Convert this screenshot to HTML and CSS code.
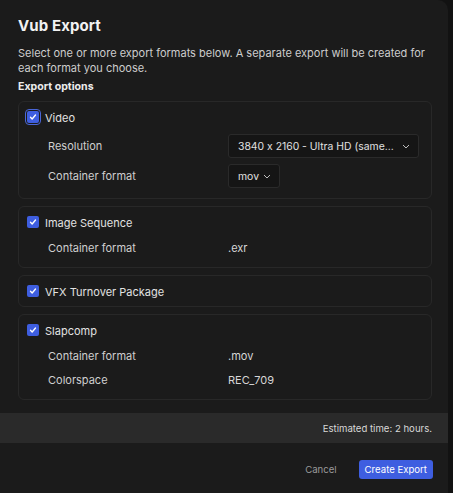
FILE: index.html
```html
<!DOCTYPE html>
<html>
<head>
<meta charset="utf-8">
<link rel="stylesheet" href="styles.css">
</head>
<body>
<div class="dialog">
  <div class="main">
    <h1 class="title">Vub Export</h1>
    <p class="desc">Select one or more export formats below. A separate export will be created for each format you choose.</p>
    <h2 class="section">Export options</h2>

    <div class="card">
      <label class="check-row">
        <span class="cb focus"><svg viewBox="0 0 12 12"><path d="M3 6.3l2 2.1L9 3.6"/></svg></span>
        <span class="cb-label">Video</span>
      </label>
      <div class="opt opt-select">
        <span class="opt-name">Resolution</span>
        <span class="select wide">3840 x 2160 - Ultra HD (same... <svg class="chev" viewBox="0 0 8 5"><path d="M1 1l3 3 3-3"/></svg></span>
      </div>
      <div class="opt opt-select">
        <span class="opt-name">Container format</span>
        <span class="select">mov <svg class="chev" viewBox="0 0 8 5"><path d="M1 1l3 3 3-3"/></svg></span>
      </div>
    </div>

    <div class="card">
      <label class="check-row">
        <span class="cb"><svg viewBox="0 0 12 12"><path d="M3 6.3l2 2.1L9 3.6"/></svg></span>
        <span class="cb-label">Image Sequence</span>
      </label>
      <div class="opt">
        <span class="opt-name">Container format</span>
        <span class="opt-val">.exr</span>
      </div>
    </div>

    <div class="card">
      <label class="check-row">
        <span class="cb"><svg viewBox="0 0 12 12"><path d="M3 6.3l2 2.1L9 3.6"/></svg></span>
        <span class="cb-label">VFX Turnover Package</span>
      </label>
    </div>

    <div class="card">
      <label class="check-row">
        <span class="cb"><svg viewBox="0 0 12 12"><path d="M3 6.3l2 2.1L9 3.6"/></svg></span>
        <span class="cb-label">Slapcomp</span>
      </label>
      <div class="opt">
        <span class="opt-name">Container format</span>
        <span class="opt-val">.mov</span>
      </div>
      <div class="opt">
        <span class="opt-name">Colorspace</span>
        <span class="opt-val">REC_709</span>
      </div>
    </div>
  </div>

  <div class="estimate">Estimated time: 2 hours.</div>

  <div class="actions">
    <button class="btn-cancel">Cancel</button>
    <button class="btn-primary">Create Export</button>
  </div>
</div>
</body>
</html>
```

FILE: styles.css
```css
* { box-sizing: border-box; }
html, body {
  margin: 0;
  padding: 0;
  background: #121212;
  height: 100%;
}
body {
  font-family: Inter, "Noto Sans", sans-serif;
  font-feature-settings: "calt" 0;
  color: #e6e6e6;
  overflow: hidden;
}
.dialog {
  width: 448px;
  height: 493px;
  background: #1b1b1b;
  border-top-right-radius: 10px;
  display: flex;
  flex-direction: column;
}
.main {
  padding: 16px 16px 0 18px;
  flex: 0 0 auto;
}
.title {
  margin: 0;
  font-size: 15px;
  font-weight: 700;
  line-height: 20px;
  color: #f2f2f2;
  letter-spacing: 0.1px;
}
.desc {
  margin: 10px 0 0;
  font-size: 11px;
  line-height: 15px;
  color: #cdcdcd;
}
.section {
  margin: 4px 0 0;
  font-size: 10.6px;
  font-weight: 700;
  line-height: 14px;
  color: #ececec;
}
.card {
  border: 1px solid #282828;
  border-radius: 6px;
  margin-top: 7px;
  padding: 7px 11px 7px 8px;
  display: flex;
  flex-direction: column;
}
.check-row {
  display: flex;
  align-items: center;
  height: 16px;
}
.check-row + .opt { margin-top: 6px; }
.cb {
  width: 12px;
  height: 12px;
  border-radius: 2px;
  background: #3e5ee0;
  display: flex;
  align-items: center;
  justify-content: center;
  margin-right: 6px;
  flex: 0 0 12px;
}
.cb.focus {
  outline: 1.5px solid #4a66d6;
  outline-offset: 1px;
}
.cb svg {
  width: 10px;
  height: 10px;
  fill: none;
  stroke: #ffffff;
  stroke-width: 1.6;
  stroke-linecap: round;
  stroke-linejoin: round;
}
.cb-label {
  font-size: 11px;
  color: #e2e2e2;
  padding-top: 2px;
}
.opt {
  display: flex;
  align-items: center;
  height: 24px;
  font-size: 11px;
  color: #cfcfcf;
  padding-left: 21px;
}
.opt-select { height: 30px; }
.opt-name {
  width: 180px;
  flex: 0 0 180px;
}
.opt-val { color: #d6d6d6; }
.select {
  display: inline-flex;
  align-items: center;
  height: 24px;
  padding: 0 8px 0 9px;
  background: #151515;
  border: 1px solid #2a2a2a;
  border-radius: 3px;
  color: #e0e0e0;
  white-space: nowrap;
  font-size: 10.4px;
}
.select.wide { width: 191px; }
.chev {
  width: 8px;
  height: 5px;
  margin-left: 4px;
  fill: none;
  stroke: #bdbdbd;
  stroke-width: 1;
  flex: 0 0 8px;
}
.select.wide .chev { margin-left: auto; }
.estimate {
  margin-top: 13px;
  height: 30px;
  background: #2a2a2a;
  display: flex;
  align-items: center;
  justify-content: flex-end;
  padding-right: 16px;
  font-size: 9.6px;
  color: #d8d8d8;
}
.actions {
  display: flex;
  justify-content: flex-end;
  align-items: center;
  gap: 12px;
  padding: 17px 15px 0 0;
}
button {
  font-family: Inter, "Noto Sans", sans-serif;
  font-feature-settings: "calt" 0;
  font-size: 9.6px;
  border: none;
  cursor: pointer;
}
.btn-cancel {
  background: transparent;
  color: #9a9a9a;
  padding: 0 10px;
  height: 19px;
}
.btn-primary {
  background: #3e5ee0;
  color: #ffffff;
  border-radius: 3px;
  height: 19px;
  padding: 0 6px;
}
```
